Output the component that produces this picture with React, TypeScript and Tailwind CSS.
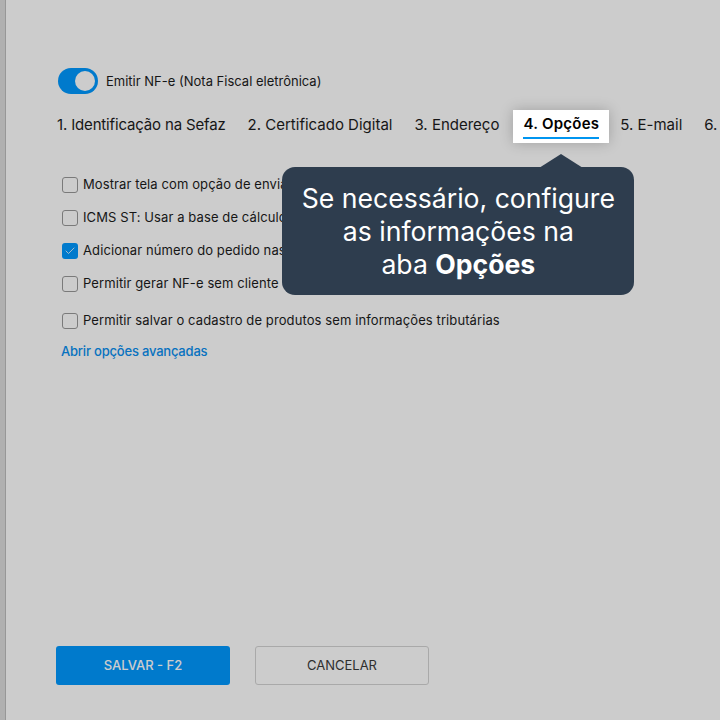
import { Check } from "lucide-react";

const tabs = [
    "1. Identificação na Sefaz",
    "2. Certificado Digital",
    "3. Endereço",
    "4. Opções",
    "5. E-mail",
    "6. Impressão",
];

const options = [
    { label: "Mostrar tela com opção de enviar a NF-e por e-mail ao finalizar a emissão", checked: false },
    { label: "ICMS ST: Usar a base de cálculo do produto para calcular o imposto", checked: false },
    { label: "Adicionar número do pedido nas informações complementares", checked: true },
    { label: "Permitir gerar NF-e sem cliente", checked: false },
    { label: "Permitir salvar o cadastro de produtos sem informações tributárias", checked: false },
];

function Checkbox({ checked }: { checked: boolean }) {
    if (checked) {
        return (
            <span className="flex items-center justify-center w-4 h-4 rounded-[3px] bg-[#0099ff] shrink-0">
                <Check className="w-3 h-3 text-white" strokeWidth={1.6} />
            </span>
        );
    }
    return <span className="w-4 h-4 rounded-[3px] border border-[#999999] bg-white shrink-0" />;
}

export default function App() {
    return (
        <div
            className="relative w-[720px] h-[720px] overflow-hidden bg-white flex text-[#1c1c1c]"
            style={{ fontFamily: "Inter, 'Noto Sans', sans-serif" }}
        >
            {/* Edge of the sidebar behind */}
            <div className="w-[6px] h-full bg-[#dcdcdc] border-r border-[#bdbdbd] shrink-0" />

            <div className="flex-1 flex flex-col pl-[50px] pt-[68px] pb-[35px] min-w-0">
                {/* NF-e toggle */}
                <div className="flex items-center gap-[8px] pl-[2px]">
                    <span className="relative w-[40px] h-[26px] rounded-full bg-[#0099ff] shrink-0">
                        <span className="absolute right-[3px] top-[3px] w-[20px] h-[20px] rounded-full bg-white" />
                    </span>
                    <span className="text-[13px] pt-[1px]">Emitir NF-e (Nota Fiscal eletrônica)</span>
                </div>

                {/* Tabs */}
                <div className="flex items-center mt-[15px] -ml-[10px] whitespace-nowrap">
                    {tabs.map((tab, i) =>
                        tab === "4. Opções" ? (
                            <div
                                key={tab}
                                className="relative z-20 bg-white ml-[3px] px-[10px] h-[33px] translate-y-[1px] flex flex-col items-center justify-center shadow-[0_0_14px_rgba(0,0,0,0.22)]"
                            >
                                <span className="text-[15px] font-semibold tracking-[0.25px] text-black leading-none pt-[1px]">{tab}</span>
                                <span className="mt-[6px] h-[2px] w-full bg-[#0095f0]" />

                                {/* Tooltip */}
                                <div className="absolute top-[57px] left-1/2 -translate-x-[279px] w-[352px]">
                                    <div className="absolute -top-[13px] left-[257px] w-0 h-0 border-l-[22px] border-r-[22px] border-b-[14px] border-l-transparent border-r-transparent border-b-[#2e3d4e]" />
                                    <div className="bg-[#2e3d4e] rounded-[13px] pt-[15px] pb-[14px] text-center text-white text-[26.6px] leading-[33px]">
                                        Se necessário, configure
                                        <br />
                                        as informações na
                                        <br />
                                        aba <span className="font-bold">Opções</span>
                                    </div>
                                </div>
                            </div>
                        ) : (
                            <span key={tab} className={`px-[11px] text-[15px] ${i === 0 ? "tracking-[-0.16px]" : ""}`}>
                                {tab}
                            </span>
                        )
                    )}
                </div>

                {/* Options */}
                <div className="flex flex-col mt-[33px] pl-[6px]">
                    {options.map((o, i) => (
                        <label
                            key={o.label}
                            className={`flex items-center gap-[5px] whitespace-nowrap text-[13px] tracking-[0.1px] h-[20px] ${i === 0 ? "" : i === 4 ? "mt-[17px]" : "mt-[13px]"}`}
                        >
                            <Checkbox checked={o.checked} />
                            <span>{o.label}</span>
                        </label>
                    ))}
                    <a className="mt-[11px] -ml-[1px] text-[13px] font-medium tracking-[-0.2px] text-[#0a8ff0]">Abrir opções avançadas</a>
                </div>

                {/* Actions */}
                <div className="mt-auto flex gap-[25px]">
                    <button className="w-[174px] h-[39px] rounded-[3px] bg-[#0099ff] text-white text-[13px] font-medium">
                        SALVAR - F2
                    </button>
                    <button className="w-[174px] h-[39px] rounded-[3px] border border-[#d4d4d4] bg-white text-[#3a3a3a] text-[13px]">
                        CANCELAR
                    </button>
                </div>
            </div>

            {/* Dim overlay */}
            <div className="absolute inset-0 z-10 bg-black/20" />
        </div>
    );
}
